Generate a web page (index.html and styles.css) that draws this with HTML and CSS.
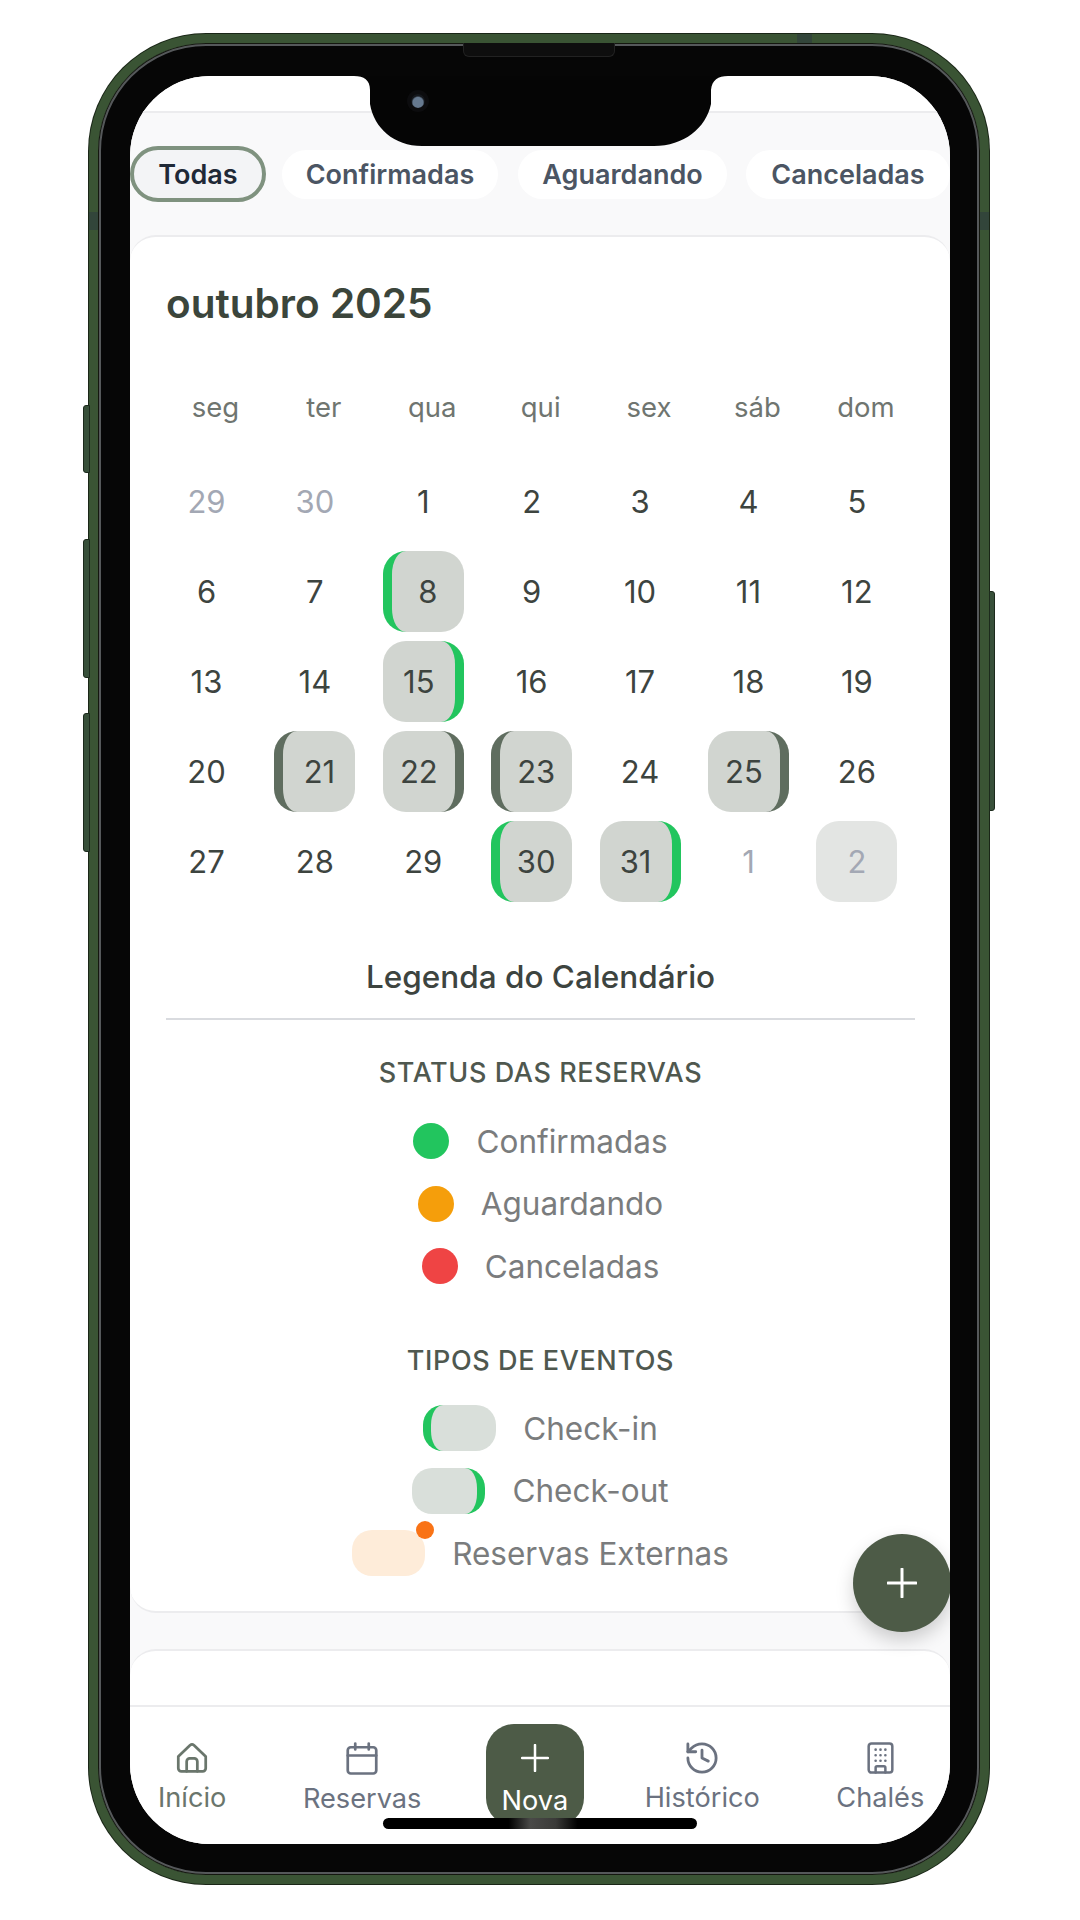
FILE: index.html
```html
<!DOCTYPE html>
<html lang="pt-BR">
<head>
    <meta charset="UTF-8">
    <meta name="viewport" content="width=device-width, initial-scale=1.0">
    <title>Reservas</title>
    <link rel="stylesheet" href="styles.css">
</head>
<body>
    <div class="phone">
        <span class="side-btn btn-mute"></span>
        <span class="side-btn btn-up"></span>
        <span class="side-btn btn-down"></span>
        <span class="side-btn btn-power"></span>
        <span class="band band-top"></span>
        <span class="band band-left"></span>
        <span class="band band-right"></span>
        <span class="speaker"></span>

        <div class="screen">
            <svg class="notch" viewBox="0 0 382 70" aria-hidden="true">
                <path d="M4 0 C14 0 20 4 20 14 V28 C24 52 44 70 72 70 H304 C334 70 356 52 361 28 V14 C362 4 368 0 378 0 Z" fill="#050505"/>
            </svg>
            <span class="camera"></span>

            <div class="status-bar"></div>

            <main class="content">
                <div class="filters">
                    <button class="pill pill-active" type="button">Todas</button>
                    <button class="pill pill-confirmed" type="button">Confirmadas</button>
                    <button class="pill pill-waiting" type="button">Aguardando</button>
                    <button class="pill pill-cancelled" type="button">Canceladas</button>
                </div>

                <section class="card calendar">
                    <h1 class="month">outubro 2025</h1>

                    <div class="weekdays">
                        <span>seg</span><span>ter</span><span>qua</span><span>qui</span><span>sex</span><span>sáb</span><span>dom</span>
                    </div>

                    <div class="days">
                        <span class="day muted">29</span>
                        <span class="day muted">30</span>
                        <span class="day">1</span>
                        <span class="day">2</span>
                        <span class="day">3</span>
                        <span class="day">4</span>
                        <span class="day">5</span>

                        <span class="day">6</span>
                        <span class="day">7</span>
                        <span class="day booked in-green">8</span>
                        <span class="day">9</span>
                        <span class="day">10</span>
                        <span class="day">11</span>
                        <span class="day">12</span>

                        <span class="day">13</span>
                        <span class="day">14</span>
                        <span class="day booked out-green">15</span>
                        <span class="day">16</span>
                        <span class="day">17</span>
                        <span class="day">18</span>
                        <span class="day">19</span>

                        <span class="day">20</span>
                        <span class="day booked in-dark">21</span>
                        <span class="day booked out-dark">22</span>
                        <span class="day booked in-dark">23</span>
                        <span class="day">24</span>
                        <span class="day booked out-dark">25</span>
                        <span class="day">26</span>

                        <span class="day">27</span>
                        <span class="day">28</span>
                        <span class="day">29</span>
                        <span class="day booked in-green">30</span>
                        <span class="day booked out-green">31</span>
                        <span class="day muted">1</span>
                        <span class="day muted booked-next">2</span>
                    </div>

                    <h2 class="legend-title">Legenda do Calendário</h2>

                    <h3 class="legend-group">STATUS DAS RESERVAS</h3>
                    <ul class="legend-list">
                        <li class="legend-row"><span class="dot dot-green"></span>Confirmadas</li>
                        <li class="legend-row"><span class="dot dot-amber"></span>Aguardando</li>
                        <li class="legend-row"><span class="dot dot-red"></span>Canceladas</li>
                    </ul>

                    <h3 class="legend-group">TIPOS DE EVENTOS</h3>
                    <ul class="legend-list">
                        <li class="legend-row"><span class="swatch swatch-in"></span>Check-in</li>
                        <li class="legend-row"><span class="swatch swatch-out"></span>Check-out</li>
                        <li class="legend-row"><span class="swatch swatch-ext"></span>Reservas Externas</li>
                    </ul>
                </section>

                <section class="card next-card"></section>
            </main>

            <button class="fab" type="button" aria-label="Nova reserva">
                <svg viewBox="0 0 30 30" width="30" height="30"><path d="M15 1V29M1 15H29" stroke="#fff" stroke-width="3" stroke-linecap="round"/></svg>
            </button>

            <nav class="tabbar">
                <a class="tab tab-home">
                    <svg viewBox="1.5 2 21 20.500" width="32" height="32"><path d="M3 11.200 10.700 3.900a2 2 0 0 1 2.600 0L21 11.200V19a2 2 0 0 1-2 2H5a2 2 0 0 1-2-2Z"/><path d="M8.500 21v-6.500a2 2 0 0 1 2-2h3a2 2 0 0 1 2 2V21"/></svg>
                    <span>Início</span>
                </a>
                <a class="tab">
                    <svg viewBox="1.500 .500 21 22" width="32" height="33"><rect x="2.500" y="4" width="19" height="17.500" rx="2"/><path d="M2.500 9.500H21.500M7.500 1.500V5.500M16.500 1.500V5.500"/></svg>
                    <span>Reservas</span>
                </a>
                <a class="tab tab-new">
                    <svg viewBox="0 0 28 28" width="28" height="28"><path d="M14 1V27M1 14H27"/></svg>
                    <span>Nova</span>
                </a>
                <a class="tab">
                    <svg viewBox="1.800 1.800 20.400 20.400" width="32" height="32"><path d="M3 12a9 9 0 1 0 9-9 9.750 9.750 0 0 0-6.740 2.740L3 8"/><path d="M3 3v5h5"/><path d="M12 7v5l4 2"/></svg>
                    <span>Histórico</span>
                </a>
                <a class="tab">
                    <svg viewBox="2.500 .500 19 23" width="27" height="32"><rect x="3.500" y="1.500" width="17" height="21" rx="2"/><path d="M8.500 22.500V19a1 1 0 0 1 1-1h5a1 1 0 0 1 1 1v3.500"/><path class="windows" d="M8.500 6h.01M12 6h.01M15.500 6h.01M8.500 10h.01M12 10h.01M15.500 10h.01M8.500 14h.01M12 14h.01M15.500 14h.01"/></svg>
                    <span>Chalés</span>
                </a>
            </nav>

            <span class="home-bar"></span>
        </div>
    </div>
</body>
</html>
```

FILE: styles.css
```css
* {
    box-sizing: border-box;
}
html, body {
    margin: 0;
    height: 1920px;
    background: #fff;
    font-family: Inter, "Liberation Sans", sans-serif;
}
body {
    display: flex;
    justify-content: center;
    padding: 34px 2px 0 0;
    overflow: hidden;
}

/* phone frame */
.phone {
    position: relative;
    width: 900px;
    height: 1850px;
    padding: 33px 30px 31px 32px;
    background: #060606;
    border: 9px solid #3a5434;
    border-radius: 117px;
    box-shadow: inset 0 0 0 1px #14170f, inset 0 0 0 3px #55585a, 0 0 0 1px #1a2617;
}
.side-btn {
    position: absolute;
    width: 7px;
    background: #38503a;
    border: 1px solid #1c2a1c;
}
.btn-mute, .btn-up, .btn-down {
    left: -15px;
    border-radius: 3px 0 0 3px;
}
.btn-mute { top: 362px; height: 68px; }
.btn-up { top: 496px; height: 139px; }
.btn-down { top: 670px; height: 139px; }
.btn-power {
    right: -15px;
    top: 548px;
    height: 220px;
    width: 6px;
    border-radius: 0 3px 3px 0;
}
.band {
    position: absolute;
    background: #32453a;
}
.band-top { top: -9px; left: 699px; width: 15px; height: 9px; }
.band-left { left: -9px; top: 169px; width: 9px; height: 18px; }
.band-right { right: -9px; top: 169px; width: 9px; height: 18px; }
.speaker {
    position: absolute;
    top: 0;
    left: 365px;
    width: 152px;
    height: 14px;
    background: #0e0e0e;
    border: 1px solid #222;
    border-top: 0;
    border-radius: 0 0 6px 6px;
}

.screen {
    position: relative;
    display: flex;
    flex-direction: column;
    height: 100%;
    background: #fff;
    border-radius: 80px;
    overflow: hidden;
}
.notch {
    position: absolute;
    top: 0;
    left: 220px;
    width: 382px;
    height: 70px;
    z-index: 5;
}
.camera {
    position: absolute;
    top: 18px;
    left: 281px;
    width: 14px;
    height: 14px;
    background: radial-gradient(circle at 50% 60%, #66798f 0 5px, #15181d 6.500px);
    border-radius: 50%;
    box-shadow: 0 0 0 4px #0c0c0e;
    z-index: 6;
}
.status-bar {
    flex: none;
    height: 37px;
    background: #fff;
    border-bottom: 2px solid #ececee;
}

/* scrolling area */
.content {
    flex: 1;
    min-height: 0;
    overflow: hidden;
    background: #f9f9fa;
}
.filters {
    display: flex;
    align-items: center;
    gap: 16px;
    height: 56px;
    margin-top: 33px;
}
.pill {
    flex: none;
    height: 49px;
    padding: 0;
    border: 0;
    border-radius: 25px;
    background: #fff;
    color: #4b5563;
    font: 600 27px Inter, sans-serif;
}
.pill-active {
    width: 136px;
    height: 56px;
    border: 4px solid #7f927f;
    border-radius: 28px;
    background: #f3f4f6;
    color: #1f2937;
}
.pill-confirmed { width: 216px; }
.pill-waiting { width: 209px; margin-left: 4px; }
.pill-cancelled { width: 204px; margin-left: 3px; }

.card {
    background: #fff;
    border: 2px solid #ececee;
    border-radius: 26px;
}
.calendar {
    height: 1378px;
    margin-top: 33px;
    padding: 45px 35px 0 36px;
    border-left: 0;
    border-right: 0;
}
.month {
    margin: 0;
    color: #3b453b;
    font-size: 40.500px;
    font-weight: 600;
    line-height: 44px;
}
.weekdays, .days {
    display: grid;
    grid-template-columns: repeat(7, 81px);
    column-gap: 27.4px;
}
.weekdays {
    margin: 64px 0 0 9px;
    color: #6f7570;
    font-size: 27.5px;
    line-height: 34px;
    text-align: center;
}
.days {
    grid-auto-rows: 81px;
    row-gap: 9px;
    margin-top: 37px;
}
.day {
    display: flex;
    align-items: center;
    justify-content: center;
    color: #3d443f;
    font-size: 31px;
    border-radius: 23px;
}
.muted {
    color: #a3a8b4;
}
.booked {
    background: #d1d5d0;
}
.booked-next {
    background: #e3e5e3;
}
.in-green { border-left: 9px solid #22c55e; }
.out-green { border-right: 9px solid #22c55e; }
.in-dark { border-left: 9px solid #5f6d5f; }
.out-dark { border-right: 9px solid #5f6d5f; }

/* legend */
.legend-title {
    margin: 55px 0 0;
    padding-bottom: 21px;
    border-bottom: 2px solid #d9dbdf;
    color: #3d443f;
    font-size: 31.500px;
    font-weight: 500;
    line-height: 40px;
    text-align: center;
}
.legend-group {
    margin: 36px 0 0;
    color: #4f584f;
    font-size: 27px;
    font-weight: 500;
    letter-spacing: 0.6px;
    line-height: 34px;
    text-align: center;
}
.legend-list + .legend-group {
    margin-top: 55px;
}
.legend-list {
    display: flex;
    flex-direction: column;
    align-items: center;
    gap: 16.5px;
    margin: 28px 0 0;
    padding: 0;
    list-style: none;
}
.legend-group + .legend-list + .legend-group + .legend-list {
    margin-top: 27px;
}
.legend-row {
    display: flex;
    align-items: center;
    gap: 27px;
    height: 46px;
    color: #7a7c7d;
    font-size: 31.5px;
}
.dot {
    width: 36px;
    height: 36px;
    border-radius: 50%;
}
.dot-green { background: #22c55e; }
.dot-amber { background: #f59e0b; }
.dot-red { background: #ef4444; }
.swatch {
    position: relative;
    width: 73px;
    height: 46px;
    border-radius: 20px;
    background: #d9dfda;
}
.swatch-in { border-left: 8px solid #22c55e; }
.swatch-out { border-right: 8px solid #22c55e; }
.swatch-ext { background: #feecd9; }
.swatch-ext::after {
    content: "";
    position: absolute;
    top: -9px;
    right: -9px;
    width: 18px;
    height: 18px;
    background: #f97316;
    border-radius: 50%;
}

.next-card {
    height: 120px;
    margin-top: 36px;
    border-left: 0;
    border-right: 0;
}

.fab {
    position: absolute;
    right: -1px;
    bottom: 212px;
    display: flex;
    align-items: center;
    justify-content: center;
    width: 98px;
    height: 98px;
    padding: 0;
    background: #4d5b47;
    border: 0;
    border-radius: 50%;
    box-shadow: 0 8px 18px rgba(0, 0, 0, 0.18);
}

/* bottom navigation */
.tabbar {
    flex: none;
    display: flex;
    align-items: flex-start;
    gap: 76.5px;
    height: 139px;
    padding: 0 28px;
    background: #fff;
    border-top: 2px solid #ececee;
}
.tab {
    flex: none;
    display: flex;
    flex-direction: column;
    align-items: center;
    gap: 7px;
    height: 108px;
    padding-top: 35px;
    color: #6b7280;
    font-size: 27.2px;
    line-height: 34px;
}
.tab svg {
    flex: none;
    fill: none;
    stroke: currentColor;
    stroke-width: 1.800;
    stroke-linecap: round;
    stroke-linejoin: round;
}
.tab .windows {
    stroke-width: 1.9;
}
.tab-home {
    color: #6a766c;
}
.tab-new {
    width: 98px;
    height: 102px;
    margin: 17px -15.8px 0 -12px;
    padding-top: 20px;
    gap: 12px;
    background: #4d5b47;
    border-radius: 28px;
    color: #fff;
}
.tab-new svg {
    stroke-width: 2.500;
}
.home-bar {
    position: absolute;
    left: 253px;
    bottom: 15px;
    width: 314px;
    height: 11px;
    background: linear-gradient(90deg, #000 0 40%, #4a4a48 47%, #3a3a38 55%, #000 62%);
    border-radius: 6px;
}
```
